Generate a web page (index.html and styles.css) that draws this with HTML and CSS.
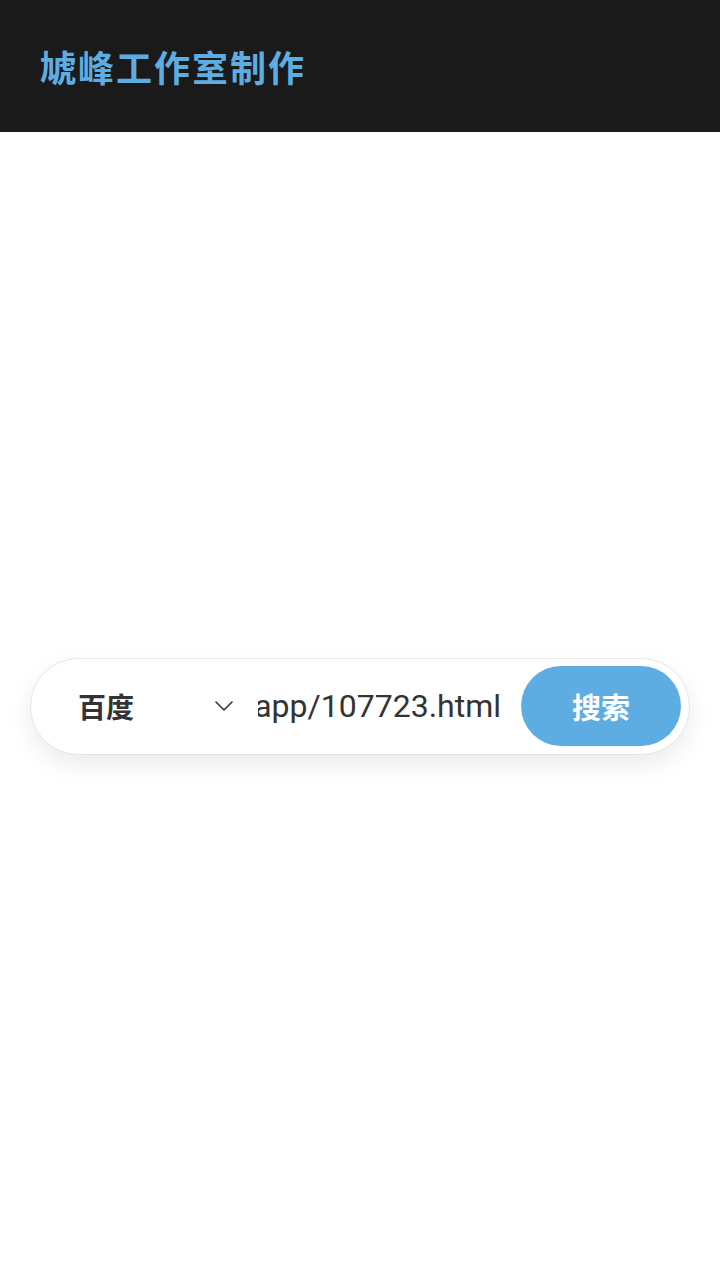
FILE: index.html
```html
<!DOCTYPE html>
<html lang="zh">
<head>
<meta charset="utf-8">
<title>虓峰工作室制作</title>
<link rel="stylesheet" href="styles.css">
</head>
<body>
<header class="topbar">
  <h1 class="title">虓峰工作室制作</h1>
</header>
<main class="stage">
  <form class="search" onsubmit="return false">
    <div class="engine">
      <span class="engine-name">百度</span>
      <svg class="chev" width="18" height="10" viewBox="0 0 18 10" aria-hidden="true"><path d="M1 1 L9 9 L17 1" fill="none" stroke="#333" stroke-width="1.6" stroke-linecap="round" stroke-linejoin="round"/></svg>
    </div>
    <div class="query"><span class="query-text">app/107723.html</span></div>
    <button class="go" type="submit">搜索</button>
  </form>
</main>
</body>
</html>
```
FILE: styles.css
```css
* { box-sizing: border-box; }
html, body { margin: 0; padding: 0; }
body {
  width: 720px;
  height: 1280px;
  background: #ffffff;
  font-family: Roboto, "Noto Sans CJK SC", sans-serif;
  display: flex;
  flex-direction: column;
}
.topbar {
  height: 132px;
  background: #1a1a1a;
  display: flex;
  align-items: center;
  padding-left: 40px;
  flex: none;
}
.title {
  margin: 0;
  color: #5dade2;
  font-family: "Noto Sans CJK SC", sans-serif;
  font-size: 36px;
  font-weight: 700;
  letter-spacing: 2px;
  line-height: 1;
}
.stage {
  flex: 1;
  display: flex;
  align-items: center;
  padding: 0 30px;
}
.search {
  width: 100%;
  height: 97px;
  border: 1px solid #e6e6e6;
  border-radius: 49px;
  background: #fff;
  box-shadow: 0 10px 24px rgba(0, 0, 0, 0.08);
  display: flex;
  align-items: center;
  padding: 0 8px 0 47px;
}
.engine {
  width: 155px;
  flex: none;
  display: flex;
  align-items: center;
  justify-content: space-between;
}
.engine-name {
  font-family: "Noto Sans CJK SC", sans-serif;
  font-size: 28px;
  font-weight: 700;
  color: #333;
}
.chev { display: block; }
.query {
  flex: 1;
  overflow: hidden;
  display: flex;
  justify-content: flex-end;
  padding-right: 20px;
  margin-left: 25px;
}
.query-text {
  white-space: nowrap;
  font-family: Roboto, sans-serif;
  font-size: 32px;
  color: #333;
}
.go {
  flex: none;
  width: 160px;
  height: 80px;
  border: none;
  border-radius: 40px;
  background: #5dade2;
  color: #fff;
  font-family: "Noto Sans CJK SC", sans-serif;
  font-size: 29px;
  font-weight: 700;
  cursor: pointer;
}
```
